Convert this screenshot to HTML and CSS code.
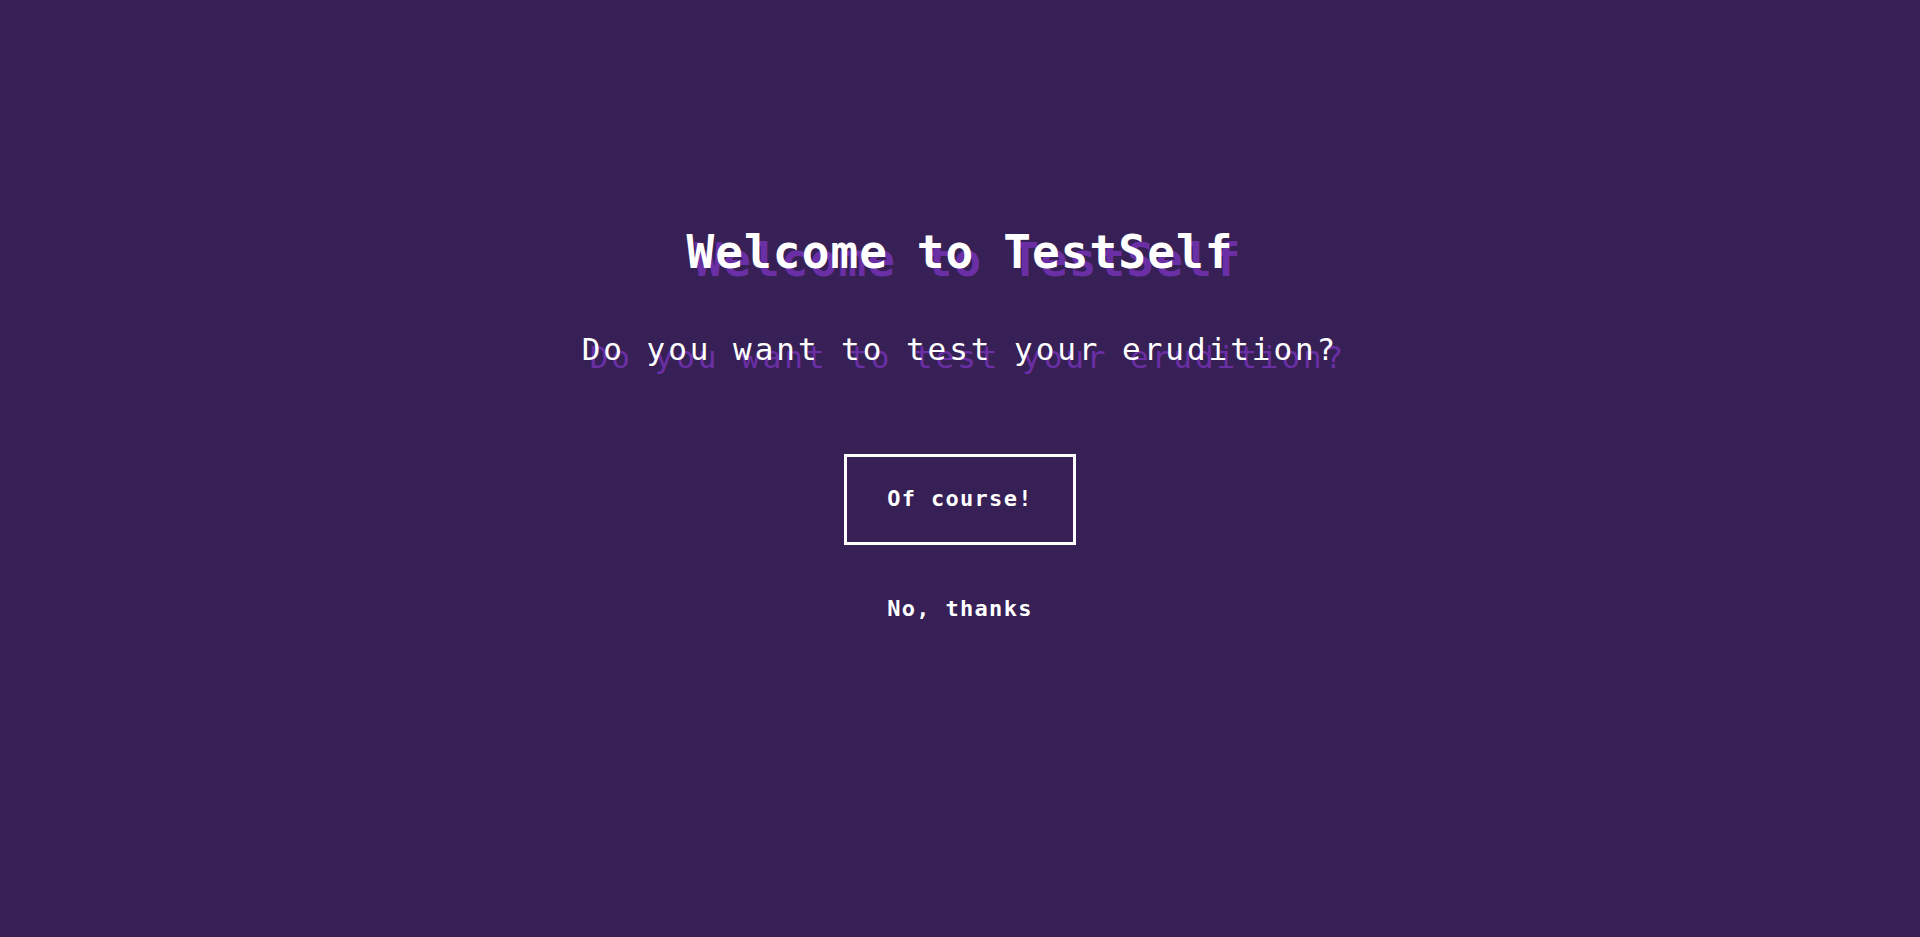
FILE: index.html
```html
<!DOCTYPE html>
<html lang="en">
<head>
<meta charset="utf-8">
<title>TestSelf</title>
<link rel="stylesheet" href="styles.css">
</head>
<body>
<main class="welcome">
  <h1 class="welcome__title">Welcome to TestSelf</h1>
  <p class="welcome__question">Do you want to test your erudition?</p>
  <button class="btn btn--primary" type="button">Of course!</button>
  <button class="btn btn--link" type="button">No, thanks</button>
</main>
</body>
</html>
```

FILE: styles.css
```css
html, body {
  margin: 0;
  padding: 0;
  height: 100%;
}

body {
  background: #372056;
  color: #ffffff;
  font-family: "DejaVu Sans Mono", "Liberation Mono", monospace;
}

.welcome {
  display: flex;
  flex-direction: column;
  align-items: center;
  padding-top: 229px;
}

.welcome__title {
  margin: 0;
  font-size: 46px;
  line-height: 46px;
  font-weight: bold;
  letter-spacing: 1.1px;
  text-shadow: 8px 8px 0 #6b2fa5;
}

.welcome__question {
  margin: 59px 0 0;
  font-size: 31px;
  line-height: 31px;
  font-weight: normal;
  letter-spacing: 2.95px;
  text-shadow: 8px 8px 0 #6b2fa5;
}

.btn {
  font-family: "DejaVu Sans Mono", "Liberation Mono", monospace;
  font-size: 22px;
  line-height: 22px;
  font-weight: bold;
  letter-spacing: 1.3px;
  color: #ffffff;
  background: transparent;
  cursor: pointer;
}

.btn--primary {
  margin-top: 89px;
  border: 3px solid #ffffff;
  padding: 31px 40px 32px;
}

.btn--link {
  margin-top: 53px;
  border: none;
  padding: 0;
}
```
